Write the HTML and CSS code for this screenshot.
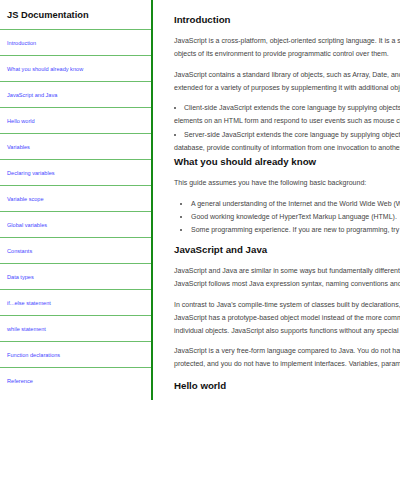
FILE: index.html
```html
<!DOCTYPE html>
<html lang="en">
<head>
<meta charset="utf-8">
<title>JS Documentation</title>
<link rel="stylesheet" href="styles.css">
</head>
<body>
<div class="layout">
  <nav class="sidebar">
    <header class="sidebar-title">JS Documentation</header>
    <ul class="nav-list">
      <li><a class="nav-link" href="#Introduction">Introduction</a></li>
      <li><a class="nav-link" href="#What_you_should_already_know">What you should already know</a></li>
      <li><a class="nav-link" href="#JavaScript_and_Java">JavaScript and Java</a></li>
      <li><a class="nav-link" href="#Hello_world">Hello world</a></li>
      <li><a class="nav-link" href="#Variables">Variables</a></li>
      <li><a class="nav-link" href="#Declaring_variables">Declaring variables</a></li>
      <li><a class="nav-link" href="#Variable_scope">Variable scope</a></li>
      <li><a class="nav-link" href="#Global_variables">Global variables</a></li>
      <li><a class="nav-link" href="#Constants">Constants</a></li>
      <li><a class="nav-link" href="#Data_types">Data types</a></li>
      <li><a class="nav-link" href="#if...else_statement">if...else statement</a></li>
      <li><a class="nav-link" href="#while_statement">while statement</a></li>
      <li><a class="nav-link" href="#Function_declarations">Function declarations</a></li>
      <li><a class="nav-link" href="#Reference">Reference</a></li>
    </ul>
  </nav>
  <main class="content">
    <section class="doc-section" id="Introduction">
      <h2 class="doc-heading">Introduction</h2>
      <p class="doc-text">JavaScript is a cross-platform, object-oriented scripting language. It is a small and lightweight language. Inside a host environment (for example, a web browser), JavaScript can be connected to the<br>objects of its environment to provide programmatic control over them.</p>
      <p class="doc-text">JavaScript contains a standard library of objects, such as Array, Date, and Math, and a core set of language elements such as operators, control structures, and statements. Core JavaScript can be<br>extended for a variety of purposes by supplementing it with additional objects; for example:</p>
      <ul class="inline-list">
        <li>Client-side JavaScript extends the core language by supplying objects to control a browser and its Document Object Model (DOM). For example, client-side extensions allow an application to place<br>elements on an HTML form and respond to user events such as mouse clicks, form input, and page navigation.</li>
        <li>Server-side JavaScript extends the core language by supplying objects relevant to running JavaScript on a server. For example, server-side extensions allow an application to communicate with a<br>database, provide continuity of information from one invocation to another of the application, or perform file manipulations on a server.</li>
      </ul>
    </section>
    <section class="doc-section" id="What_you_should_already_know">
      <h2 class="doc-heading">What you should already know</h2>
      <p class="doc-text">This guide assumes you have the following basic background:</p>
      <ul class="bullet-list">
        <li>A general understanding of the Internet and the World Wide Web (WWW).</li>
        <li>Good working knowledge of HyperText Markup Language (HTML).</li>
        <li>Some programming experience. If you are new to programming, try one of the tutorials linked on the main page about JavaScript.</li>
      </ul>
    </section>
    <section class="doc-section" id="JavaScript_and_Java">
      <h2 class="doc-heading">JavaScript and Java</h2>
      <p class="doc-text">JavaScript and Java are similar in some ways but fundamentally different in some others. The JavaScript language resembles Java but does not have Java's static typing and strong type checking.<br>JavaScript follows most Java expression syntax, naming conventions and basic control-flow constructs which was the reason why it was renamed from LiveScript to JavaScript.</p>
      <p class="doc-text">In contrast to Java's compile-time system of classes built by declarations, JavaScript supports a runtime system based on a small number of data types representing numeric, Boolean, and string values.<br>JavaScript has a prototype-based object model instead of the more common class-based object model. The prototype-based model provides dynamic inheritance; that is, what is inherited can vary for<br>individual objects. JavaScript also supports functions without any special declarative requirements.</p>
      <p class="doc-text">JavaScript is a very free-form language compared to Java. You do not have to declare all variables, classes, and methods. You do not have to be concerned with whether methods are public, private, or<br>protected, and you do not have to implement interfaces. Variables, parameters, and function return types are not explicitly typed.</p>
    </section>
    <section class="doc-section" id="Hello_world">
      <h2 class="doc-heading">Hello world</h2>
      <p class="doc-text">To get started with writing JavaScript, open the Scratchpad and write your first "Hello world" JavaScript code:</p>
    </section>
  </main>
</div>
</body>
</html>
```
FILE: styles.css
```css
html, body {
  margin: 0;
  padding: 0;
  background: #ffffff;
}

body {
  font-family: "Liberation Sans", Arial, sans-serif;
  overflow: hidden;
}

.layout {
  display: flex;
  height: 400px;
  overflow: hidden;
}

.sidebar {
  flex: none;
  width: 151px;
  border-right: 2px solid #158a15;
}

.sidebar-title {
  box-sizing: border-box;
  height: 29px;
  padding: 8px 7px 0;
  font-weight: bold;
  font-size: 9.3px;
  line-height: 14px;
  color: #111111;
}

.nav-list {
  list-style: none;
  margin: 0;
  padding: 0;
}

.nav-list li {
  border-top: 1px solid #6cbf6c;
}

.nav-link {
  display: flex;
  align-items: center;
  height: 25px;
  padding: 0 7px;
  font-size: 5.6px;
  color: #4747ff;
  text-decoration: none;
}

.content {
  flex: 1;
  min-width: 0;
  overflow: hidden;
  padding: 12px 0 0 21px;
  white-space: nowrap;
}

.doc-heading {
  margin: 0 0 6px;
  font-size: 9.7px;
  line-height: 16px;
  font-weight: bold;
  color: #111111;
}

.doc-text {
  margin: 0 0 7.5px;
  font-size: 7px;
  line-height: 13px;
  color: #444444;
}

.inline-list {
  margin: 0;
  padding: 0;
  list-style: disc inside;
  font-size: 7px;
  line-height: 13px;
  color: #444444;
}

.inline-list li {
  margin-bottom: 1px;
}

.inline-list li:last-child {
  margin-bottom: 0;
}

.bullet-list {
  margin: 0 0 6px;
  padding: 0 0 0 17px;
  font-size: 7px;
  line-height: 13.3px;
  color: #444444;
}
```
